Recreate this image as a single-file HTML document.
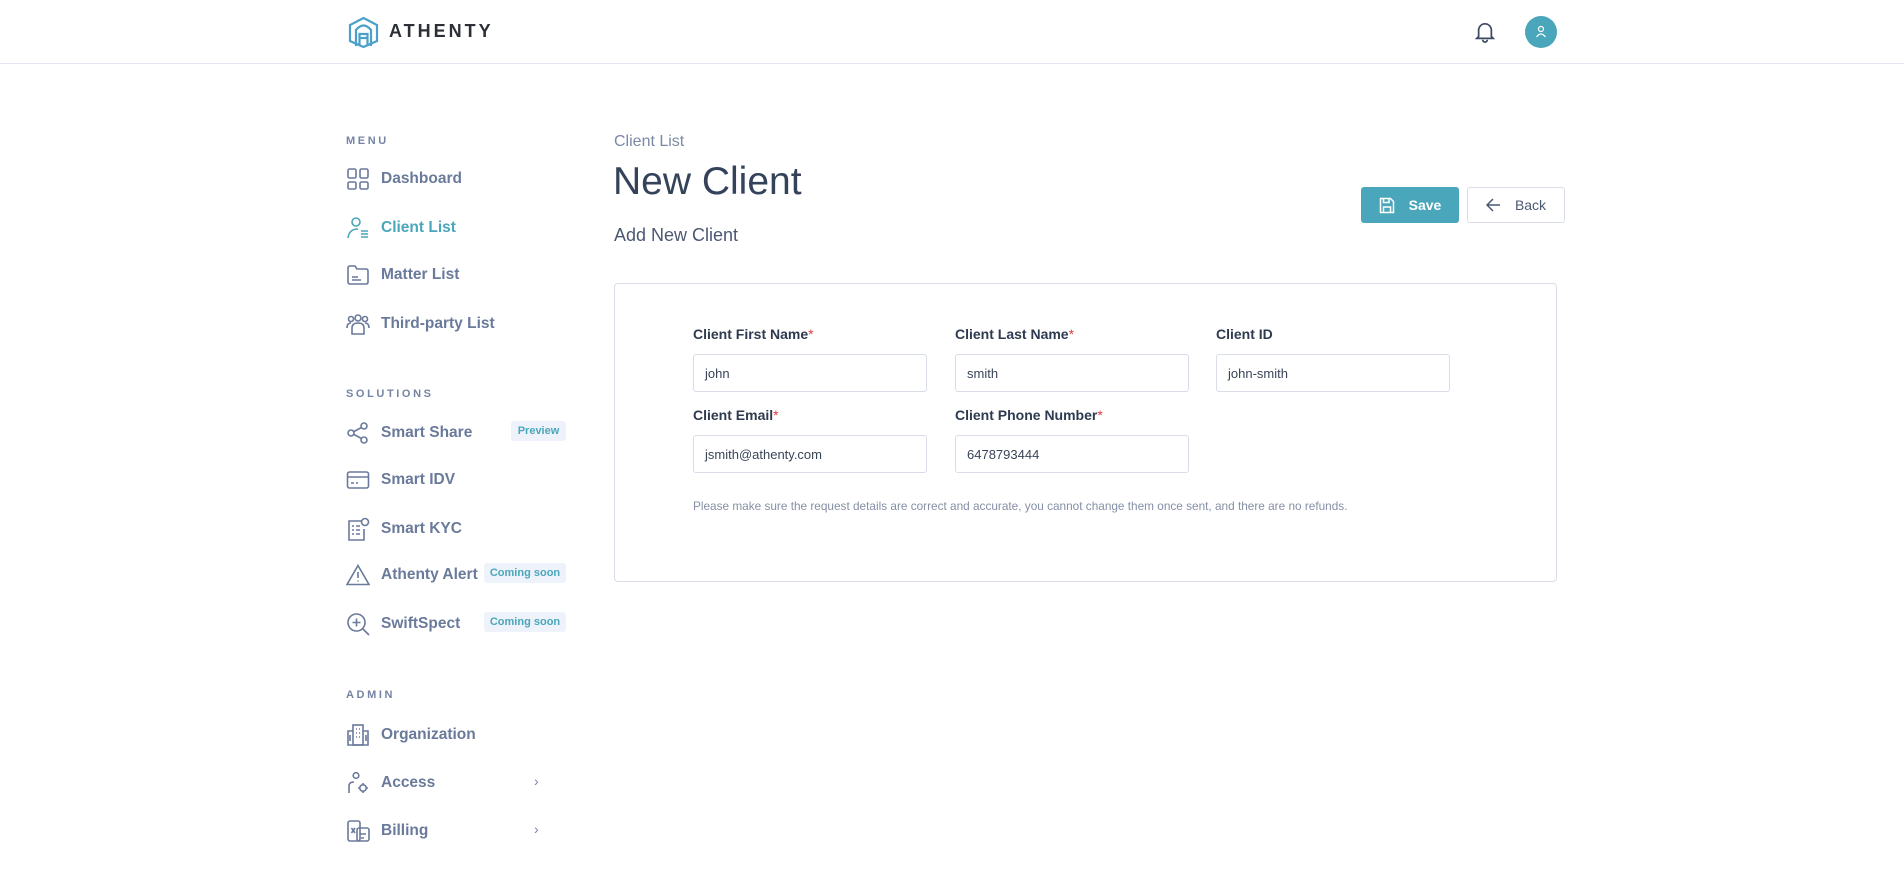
<!DOCTYPE html>
<html><head><meta charset="utf-8"><style>
*{box-sizing:border-box;margin:0;padding:0}
body{width:1904px;height:875px;background:#fff;font-family:"Liberation Sans",sans-serif;position:relative;overflow:hidden}
.hdr{position:absolute;left:0;top:0;width:1904px;height:64px;border-bottom:1px solid #e3e7ef}
.abs{position:absolute}
.sec{position:absolute;left:346px;font-size:11px;font-weight:bold;letter-spacing:2.6px;color:#7584a3}
.it{position:absolute;left:346px;height:26px;display:flex;align-items:center;color:#6a7a9b;font-size:15.5px;font-weight:bold}
.it svg{width:24px;height:24px;margin-right:11px;fill:none;stroke:#6a7a9b;stroke-width:1.6}
.it.act{color:#4aa6ba}.it.act svg{stroke:#4aa6ba}
.badge{position:absolute;height:20px;background:#eef2fa;border-radius:3px;color:#4aa6ba;font-size:11px;font-weight:bold;display:flex;align-items:center;justify-content:center}
.chev{position:absolute;left:534px;color:#7584a3;font-size:14px}
.lbl{position:absolute;font-size:14px;font-weight:bold;color:#2e3a4f}
.lbl b{color:#e23b3b;font-weight:normal}
.inp{position:absolute;width:234px;height:38px;border:1px solid #d9dde8;border-radius:3px;font-size:13px;color:#3a4458;padding-left:11px;display:flex;align-items:center}
</style></head><body>
<div class="hdr">
<svg class="abs" style="left:348px;top:16px" width="31" height="32" viewBox="0 0 31 32" fill="none" stroke="#4aa0c8" stroke-width="2.2"><path d="M15.5 2 L29 9 V25 L15.5 31 L2 25 V9 Z"/><path d="M8 30 V14 Q15.5 5 23 14 V30"/><path d="M11.5 30 V18 H19.5 V30 M11.5 22 H19.5"/></svg>
<div class="abs" style="left:389px;top:21px;font-size:18px;font-weight:bold;letter-spacing:3px;color:#2b2f36">ATHENTY</div>
<svg class="abs" style="left:1475px;top:21px" width="20" height="22" viewBox="0 0 22 24" fill="none" stroke="#3d4a66" stroke-width="1.9"><path d="M4 17 V10 A7 7 0 0 1 18 10 V17 L20 19 H2 Z"/><path d="M8.5 20.5 A2.5 2.5 0 0 0 13.5 20.5"/></svg>
<div class="abs" style="left:1525px;top:16px;width:32px;height:32px;border-radius:50%;background:#4aa6ba"></div>
<svg class="abs" style="left:1535px;top:25px" width="12" height="13" viewBox="0 0 12 13" fill="none" stroke="#fff" stroke-width="1.2"><circle cx="6" cy="4" r="2.5"/><path d="M1.5 12 Q6 6 10.5 12"/></svg>
</div>

<div class="sec" style="top:135px">MENU</div>
<div class="it" style="top:166px"><svg viewBox="0 0 24 24"><rect x="2" y="2" width="8" height="9" rx="1.5"/><rect x="14" y="2" width="8" height="9" rx="1.5"/><rect x="2" y="15" width="8" height="7" rx="1.5"/><rect x="14" y="15" width="8" height="7" rx="1.5"/></svg>Dashboard</div>
<div class="it act" style="top:215px"><svg viewBox="0 0 24 24"><circle cx="10" cy="6" r="4"/><path d="M2 22 Q3 13 12 13"/><path d="M15 15 H22 M15 18 H22 M15 21 H22"/></svg>Client List</div>
<div class="it" style="top:262px"><svg viewBox="0 0 24 24"><path d="M2 5 Q2 3 4 3 H9 L11 6 H20 Q22 6 22 8 V19 Q22 21 20 21 H4 Q2 21 2 19 Z"/><path d="M6 14 H12 M6 17 H15"/></svg>Matter List</div>
<div class="it" style="top:311px"><svg viewBox="0 0 24 24"><circle cx="5" cy="7" r="2.5"/><circle cx="12" cy="6" r="3"/><circle cx="19" cy="7" r="2.5"/><path d="M1 16 Q1 11 5 11 M23 16 Q23 11 19 11 M6 22 V16 Q6 11 12 11 Q18 11 18 16 V22 Z"/></svg>Third-party List</div>

<div class="sec" style="top:388px">SOLUTIONS</div>
<div class="it" style="top:420px"><svg viewBox="0 0 24 24"><circle cx="5" cy="12" r="3"/><circle cx="18" cy="5" r="3"/><circle cx="18" cy="19" r="3"/><path d="M8 10.5 L15.5 6.5 M8 13.5 L15.5 17.5"/></svg>Smart Share</div>
<div class="badge" style="left:511px;top:421px;width:55px">Preview</div>
<div class="it" style="top:467px"><svg viewBox="0 0 24 24"><rect x="1.5" y="4" width="21" height="16" rx="2"/><path d="M1.5 9 H22.5 M5 15 H8 M10 15 H12"/></svg>Smart IDV</div>
<div class="it" style="top:516px"><svg viewBox="0 0 24 24"><path d="M16 4 H3 V23 H18 V12"/><circle cx="19" cy="5" r="3.5"/><path d="M6 9 H8 M10 9 H14 M6 13 H8 M10 13 H14 M6 17 H8 M10 17 H14"/></svg>Smart KYC</div>
<div class="it" style="top:562px"><svg viewBox="0 0 24 24"><path d="M12 2.5 L23 21.5 H1 Z"/><path d="M12 9 V15 M12 17.5 V18.5"/></svg>Athenty Alert</div>
<div class="badge" style="left:484px;top:563px;width:82px">Coming soon</div>
<div class="it" style="top:611px"><svg viewBox="0 0 24 24"><circle cx="10.5" cy="10.5" r="8.5"/><path d="M16.5 16.5 L23 23 M10.5 6.5 V14.5 M6.5 10.5 H14.5"/></svg>SwiftSpect</div>
<div class="badge" style="left:484px;top:612px;width:82px">Coming soon</div>

<div class="sec" style="top:689px">ADMIN</div>
<div class="it" style="top:722px"><svg viewBox="0 0 24 24"><rect x="7" y="2" width="10" height="20"/><path d="M7 8 H2 V22 H22 V8 H17 M10 6 H11 M13 6 H14 M10 10 H11 M13 10 H14 M10 14 H11 M13 14 H14 M4 12 V18 M20 12 V18"/></svg>Organization</div>
<div class="it" style="top:770px"><svg viewBox="0 0 24 24"><circle cx="10" cy="4.5" r="2.8"/><path d="M3 22 V15 Q3 11 8 11"/><circle cx="17" cy="17" r="3.2"/><path d="M17 12 V13.5 M17 20.5 V22 M12 17 H13.5 M20.5 17 H22"/></svg>Access</div>
<div class="chev" style="top:773px">›</div>
<div class="it" style="top:818px"><svg viewBox="0 0 24 24"><rect x="2" y="2" width="12" height="20" rx="2"/><rect x="11" y="9" width="12" height="13" rx="2"/><path d="M5.5 9 L9 14 M9 9 L5.5 14 M14 15 H20 M15 19 H18"/></svg>Billing</div>
<div class="chev" style="top:821px">›</div>

<div class="abs" style="left:614px;top:133px;font-size:16px;color:#7b89a3">Client List</div>
<div class="abs" style="left:613px;top:160px;font-size:39px;color:#34425a">New Client</div>
<div class="abs" style="left:614px;top:225px;font-size:18px;color:#4b5872">Add New Client</div>

<div class="abs" style="left:1361px;top:187px;width:98px;height:36px;background:#4aa6ba;border-radius:3px;color:#fff;font-size:14px;font-weight:bold;display:flex;align-items:center;justify-content:center">
<svg width="16" height="17" viewBox="0 0 16 17" fill="none" stroke="#fff" stroke-width="1.5" style="margin-right:14px"><path d="M1.5 1.5 H11.5 L14.5 4.5 V15.5 H1.5 Z"/><path d="M4.5 1.5 V5.5 H10 V1.5 M4.5 15.5 V10 H11.5 V15.5"/></svg>Save</div>
<div class="abs" style="left:1467px;top:187px;width:98px;height:36px;border:1px solid #d9dde8;border-radius:3px;color:#4b5872;font-size:14px;display:flex;align-items:center;justify-content:center">
<svg width="15" height="14" viewBox="0 0 15 14" fill="none" stroke="#4b5872" stroke-width="1.5" style="margin-right:14px"><path d="M14 7 H1.5 M7 1 L1 7 L7 13"/></svg>Back</div>

<div class="abs" style="left:614px;top:283px;width:943px;height:299px;border:1px solid #d9dde8;border-radius:4px"></div>
<div class="lbl" style="left:693px;top:326px">Client First Name<b>*</b></div>
<div class="lbl" style="left:955px;top:326px">Client Last Name<b>*</b></div>
<div class="lbl" style="left:1216px;top:326px">Client ID</div>
<div class="inp" style="left:693px;top:354px">john</div>
<div class="inp" style="left:955px;top:354px">smith</div>
<div class="inp" style="left:1216px;top:354px">john-smith</div>
<div class="lbl" style="left:693px;top:407px">Client Email<b>*</b></div>
<div class="lbl" style="left:955px;top:407px">Client Phone Number<b>*</b></div>
<div class="inp" style="left:693px;top:435px">jsmith@athenty.com</div>
<div class="inp" style="left:955px;top:435px">6478793444</div>
<div class="abs" style="left:693px;top:499px;font-size:11.8px;color:#8590a6">Please make sure the request details are correct and accurate, you cannot change them once sent, and there are no refunds.</div>
</body></html>
